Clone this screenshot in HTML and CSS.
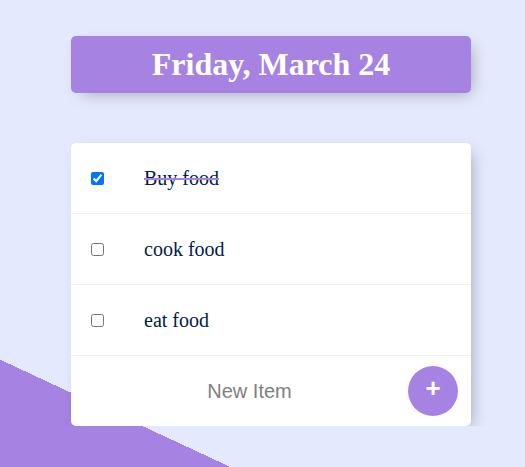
FILE: index.html
```html
<!DOCTYPE html>
<html lang="en">
<head>
<meta charset="utf-8">
<title>To-Do List</title>
<link rel="stylesheet" href="styles.css">
</head>
<body>
  <div class="box heading">
    <h1 class="title">Friday, March 24</h1>
  </div>
  <div class="box list">
    <div class="item">
      <input class="check" type="checkbox" checked>
      <p class="text done">Buy food</p>
    </div>
    <div class="item">
      <input class="check" type="checkbox">
      <p class="text">cook food</p>
    </div>
    <div class="item">
      <input class="check" type="checkbox">
      <p class="text">eat food</p>
    </div>
    <form class="item new-form">
      <input class="new-input" type="text" name="newItem" placeholder="New Item" autocomplete="off">
      <button class="add-btn" type="button">+</button>
    </form>
  </div>
</body>
</html>
```

FILE: styles.css
```css
html {
  background-color: #E4E9FD;
  background-image: linear-gradient(25deg, #A683E3 50%, #E4E9FD 50%);
  background-size: 100% 964px;
  background-repeat: no-repeat;
  min-height: 100%;
  font-family: "Liberation Serif", "Times New Roman", serif;
}

body {
  margin: 0;
  padding: 36px 0 0 71px;
}

.box {
  width: 400px;
  background: #fff;
  border-radius: 5px;
  box-shadow: 5px 5px 15px -5px rgba(0, 0, 0, 0.3);
}

.heading {
  background-color: #A683E3;
  text-align: center;
}

.title {
  margin: 0;
  padding: 10px;
  color: #fff;
  font-size: 32px;
  font-weight: bold;
  line-height: 37px;
}

.list {
  margin-top: 50px;
}

.item {
  min-height: 70px;
  display: flex;
  align-items: center;
  border-bottom: 1px solid #F1F1F1;
}

.item:last-child {
  border-bottom: 0;
}

.check {
  margin: 20px;
  width: 13px;
  height: 13px;
}

.text {
  margin: 0;
  padding: 20px;
  font-size: 20px;
  font-weight: 200;
  color: #00204a;
}

.done {
  text-decoration: line-through;
  text-decoration-color: #A683E3;
  text-decoration-thickness: 2px;
}

.new-form {
  margin: 0 0 0 20px;
}

.new-input {
  text-align: center;
  height: 60px;
  border: none;
  padding: 1px 2px;
  background: transparent;
  font-family: "Liberation Sans", Arial, sans-serif;
  font-size: 20px;
  font-weight: 200;
  width: 313px;
  box-sizing: content-box;
  outline: none;
}

.new-input::placeholder {
  color: grey;
  opacity: 1;
}

.add-btn {
  width: 50px;
  height: 50px;
  border-radius: 50%;
  border: 0;
  background-color: #A683E3;
  color: #fff;
  font-family: "Liberation Sans", Arial, sans-serif;
  font-size: 26px;
  font-weight: bold;
  padding: 0 0 6px;
  line-height: 1;
}
```
